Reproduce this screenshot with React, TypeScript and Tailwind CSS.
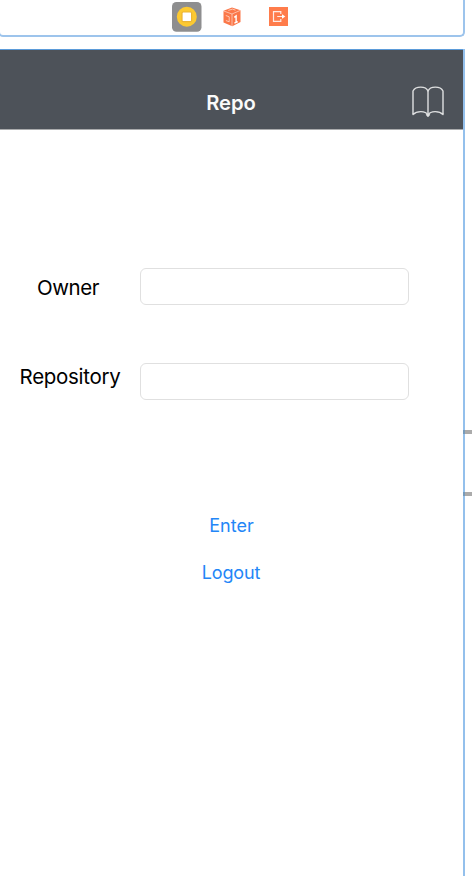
import type { ReactNode } from 'react';

function ViewControllerIcon() {
  return (
    <svg className="h-[30px] w-[30px]" viewBox="0 0 30 30">
      <rect width="29.5" height="29.8" rx="4.5" fill="#8e8e8f" />
      <circle cx="14.8" cy="14.8" r="10" fill="#fcc931" />
      <rect x="10" y="10" width="9.6" height="9.6" rx="1" fill="#fff" stroke="#ecb435" strokeWidth="1.2" />
    </svg>
  );
}

function ResponderIcon() {
  return (
    <svg className="h-[20px] w-[18px]" viewBox="0 0 18 20">
      <path d="M9 .5 17.5 3.3V15L9.3 19.3.5 15.5V3.8Z" fill="#fb7748" />
      <path d="m.7 4 8.3 3 8.3-3.6M9 7v12" fill="none" stroke="#fff" strokeOpacity=".65" strokeWidth=".8" />
      <path d="m5.3 3.4 4.2-1.3 3 1.1M2.8 8.5l3.4 1.3v5l-3.3-1.3" fill="none" stroke="#fff" strokeOpacity=".65" strokeWidth=".9" />
      <path d="m11.3 10.4 1.8-1.4v6.5m-1.7.7 3.4-1.6" fill="none" stroke="#fff" strokeWidth="1.4" />
    </svg>
  );
}

function ExitIcon() {
  return (
    <svg className="h-[19px] w-[19px]" viewBox="0 0 19 19">
      <path d="M0 0h19v19H0z" fill="#ff7c4b" />
      <path d="M11.8 7V4.7H4.5v9.6h7.3V12M8.2 9.5h5.5" fill="none" stroke="#fff" strokeOpacity=".85" strokeWidth="1.2" />
      <path d="m13 7.2 3.3 2.3-3.3 2.3Z" fill="#fff" />
    </svg>
  );
}

function BookIcon() {
  return (
    <svg className="h-[32px] w-[32px]" viewBox="0 0 32 32" fill="none" stroke="#dfe0e1" strokeWidth="1.4" strokeLinejoin="round">
      <path d="M16 5C13.8 0 3.8-.2 1 5v23.5c3.7-3.8 12.4-4 15 .5 2.6-4.5 11.3-4.3 15-.5V5C28.200-.2 18.200 0 16 5Z" />
      <path d="M16 5v24" />
      <path d="m14.300 28.200 1.700 2.100 1.700-2.100" />
    </svg>
  );
}

function Field({ label, children }: { label: string; children: ReactNode }) {
  return (
    <div className="flex h-[37px] items-start">
      <div className="flex w-[140px] justify-center">{children}</div>
      <input aria-label={label} className="h-[37px] w-[269px] rounded-[6px] border border-[#e0e0e0] bg-white outline-none" />
    </div>
  );
}

export default function App() {
  return (
    <div className="h-[876px] w-[472px] overflow-hidden bg-white font-['Inter','Liberation_Sans',sans-serif] text-black">
      <div className="-ml-[2px] flex h-[37px] w-[467px] items-start rounded-b-[5px] border-x-2 border-b-2 border-[#9dc4ec] pl-[172px]">
        <div className="mt-[2px]"><ViewControllerIcon /></div>
        <div className="mt-[7px] ml-[21px]"><ResponderIcon /></div>
        <div className="mt-[7px] ml-[28px]"><ExitIcon /></div>
      </div>

      <div className="mt-[12px] flex h-[827px]">
        <main className="w-[463px] shrink-0">
          <header className="flex h-[81px] items-end border-t border-b border-t-[#5b9bd9] border-b-[#aaabad] bg-[#4d5259]">
            <h1 className="w-full pb-[14px] pl-[50px] text-center text-[20.200px] leading-[24px] font-semibold text-[#fafafa]">Repo</h1>
            <button aria-label="Open book" className="mr-[19px] mb-[11px] shrink-0"><BookIcon /></button>
          </header>
          <form className="pt-[138px]">
            <Field label="Owner">
              <span className="mt-[8px] ml-[-4px] text-[20.5px] leading-[24px] tracking-[-0.4px]">Owner</span>
            </Field>
            <div className="h-[58px]" />
            <Field label="Repository">
              <span className="mt-[2px] text-[20.5px] leading-[24px] tracking-[-0.3px]">Repository</span>
            </Field>
            <div className="flex flex-col items-center gap-[23px] pt-[114px] text-[18px] leading-[24px] text-[#2386f7]">
              <button type="button">Enter</button>
              <button type="button" className="-ml-[1px] tracking-[-0.1px]">Logout</button>
            </div>
          </form>
        </main>
        <div className="w-[2px] shrink-0 bg-[#94c0ec] pt-[381px]">
          <div className="h-[4px] bg-[#769bbc]" />
          <div className="mt-[58px] h-[4px] bg-[#769bbc]" />
        </div>
        <div className="grow pt-[381px]">
          <div className="h-[4px] bg-[#ababab]" />
          <div className="mt-[58px] h-[4px] bg-[#ababab]" />
        </div>
      </div>
    </div>
  );
}
